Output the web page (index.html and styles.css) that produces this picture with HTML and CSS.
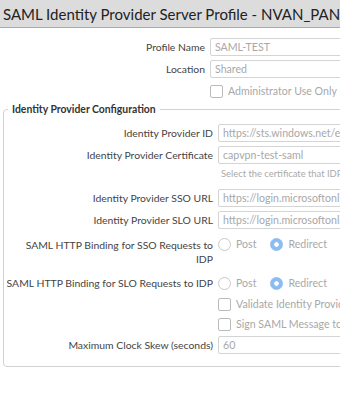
FILE: index.html
```html
<!DOCTYPE html>
<html>
    <head>
        <title>SAML Identity Provider Server Profile</title>
        <link rel="stylesheet" href="styles.css">
    </head>
    <body>
        <div class="titlebar">SAML Identity Provider Server Profile - NVAN_PAN</div>

        <div class="page">
            <div class="form">
                <label>Profile Name</label>
                <div class="input">SAML-TEST</div>

                <label>Location</label>
                <div class="input">Shared</div>

                <span></span>
                <div class="check"><span class="box"></span>Administrator Use Only</div>
            </div>

            <fieldset>
                <legend>Identity Provider Configuration</legend>
                <div class="form">
                    <label>Identity Provider ID</label>
                    <div class="input">https://sts.windows.net/ed3c1e8b-5f2a</div>

                    <label class="top cert">Identity Provider Certificate</label>
                    <div class="field">
                        <div class="input">capvpn-test-saml</div>
                        <div class="hint">Select the certificate that IDP uses to sign SAML messages</div>
                    </div>

                    <label>Identity Provider SSO URL</label>
                    <div class="input">https://login.microsoftonline.com/ed3c1e8b</div>

                    <label>Identity Provider SLO URL</label>
                    <div class="input">https://login.microsoftonline.com/ed3c1e8b</div>

                    <label class="top binding">SAML HTTP Binding for SSO Requests to<br>IDP</label>
                    <div class="radios top binding">
                        <span class="radio"><span class="dot"></span>Post</span>
                        <span class="radio"><span class="dot on"></span>Redirect</span>
                    </div>

                    <label class="slo">SAML HTTP Binding for SLO Requests to IDP</label>
                    <div class="radios slo">
                        <span class="radio"><span class="dot"></span>Post</span>
                        <span class="radio"><span class="dot on"></span>Redirect</span>
                    </div>

                    <span></span>
                    <div class="check small"><span class="box"></span>Validate Identity Provider Certificate</div>

                    <span></span>
                    <div class="check small"><span class="box"></span>Sign SAML Message to IDP</div>

                    <label>Maximum Clock Skew (seconds)</label>
                    <div class="input">60</div>
                </div>
            </fieldset>
        </div>
    </body>
</html>
```

FILE: styles.css
```css
body {
    font-family: Lato, "Open Sans", sans-serif;
    margin: 0;
    padding: 0;
    width: 340px;
    height: 400px;
    overflow: hidden;
    background: #fff;
    color: #333;
}

.titlebar {
    height: 27px;
    line-height: 28px;
    padding-left: 3px;
    font-size: 15px;
    white-space: nowrap;
    background: #dcdcdc;
    border-bottom: 1px solid #a9a9a9;
    color: #222;
}

.page {
    width: 520px;
    padding-top: 10px;
}

.form {
    display: grid;
    grid-template-columns: 205px 1fr;
    column-gap: 5px;
    row-gap: 4px;
    align-items: center;
    font-size: 10.6px;
}

.form label {
    display: flex;
    justify-content: flex-end;
    text-align: right;
    white-space: nowrap;
    color: #444;
    font-size: 10.4px;
    line-height: 14px;
}

.form .top {
    align-self: start;
}

.form .cert {
    padding-top: 2px;
}

.form .binding {
    margin-top: 5px;
}

.form .slo {
    margin-top: 4px;
}

.input {
    height: 16px;
    line-height: 16px;
    padding: 0 4px;
    border: 1px solid #d4d4d4;
    border-radius: 2px;
    color: #a8a8a8;
    white-space: nowrap;
    overflow: hidden;
}

.hint {
    font-size: 9.4px;
    color: #aaa;
    padding: 4px 0 6px 3px;
    white-space: nowrap;
}

.check {
    display: flex;
    align-items: center;
    gap: 5px;
    height: 18px;
    color: #a8a8a8;
    white-space: nowrap;
}

.check.small {
    height: 16px;
}

.box {
    width: 11px;
    height: 11px;
    border: 1px solid #bbb;
    border-radius: 2px;
}

.radios {
    display: flex;
    gap: 14px;
    color: #a8a8a8;
    height: 18px;
    align-items: center;
}

.radios.top {
    margin-top: 2px;
}

.radio {
    display: flex;
    align-items: center;
    gap: 5px;
}

.dot {
    width: 11px;
    height: 11px;
    border: 1px solid #c8c8c8;
    border-radius: 50%;
    box-sizing: content-box;
}

.dot.on {
    border-color: #8bbcf2;
    background: radial-gradient(circle, #fff 0 2px, #8bbcf2 2.5px);
}

fieldset {
    margin: 3px 0 0 3px;
    padding: 9px 4px 12px 4px;
    border: 1px solid #d2d2d2;
    border-radius: 4px;
}

legend {
    padding: 0 4px;
    font-size: 10.4px;
    font-weight: bold;
    color: #333;
}
```
